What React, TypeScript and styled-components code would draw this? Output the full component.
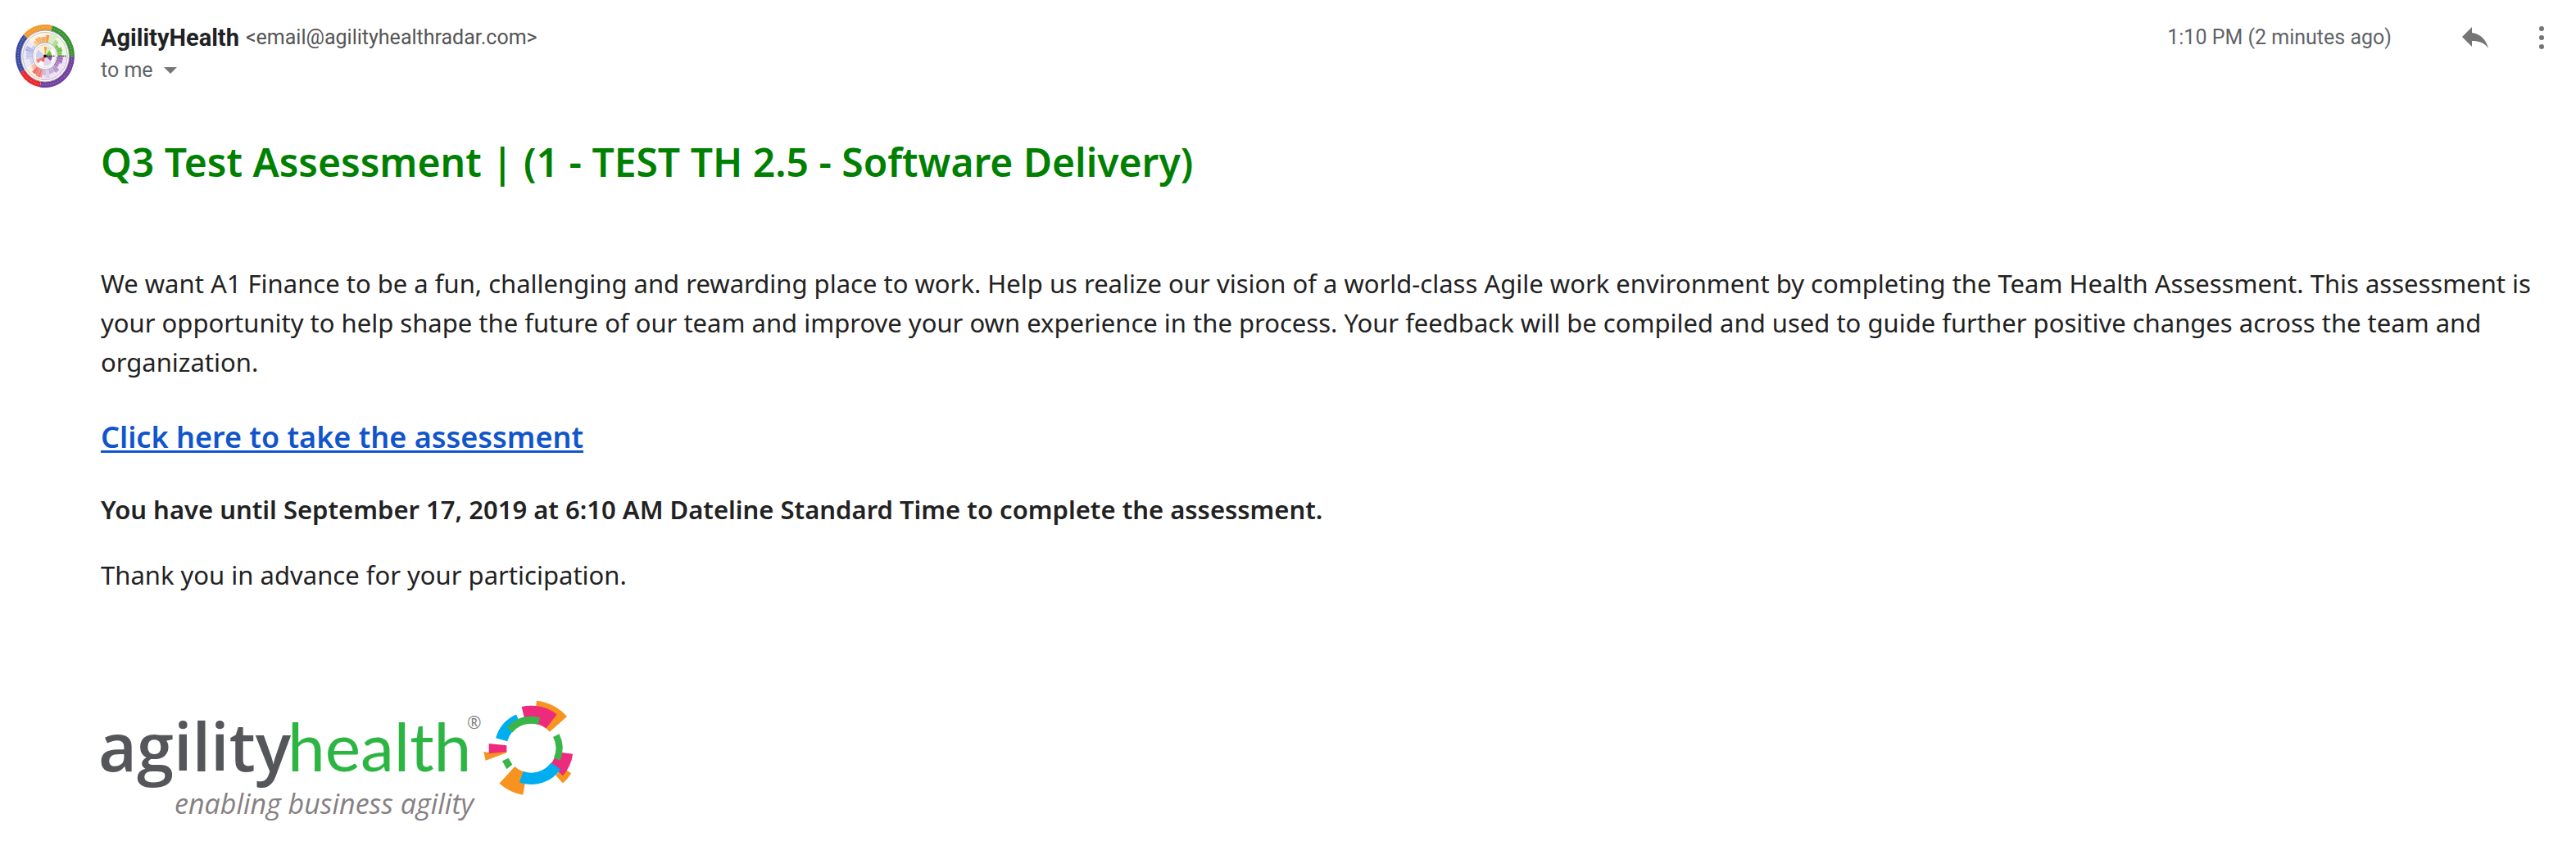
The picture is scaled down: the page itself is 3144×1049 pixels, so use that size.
import React from "react";
import styled, { createGlobalStyle } from "styled-components";

const GlobalStyle = createGlobalStyle`
  body {
    margin: 0;
    background: #fff;
    color: #222;
    font-family: "Noto Sans", "Open Sans", sans-serif;
  }
`;

const Message = styled.article`
  display: grid;
  grid-template-columns: 72px minmax(0, 1fr);
  column-gap: 32px;
  padding: 26px 18px 44px 19px;
`;

const AvatarCell = styled.div`
  padding-top: 4px;
  svg {
    display: block;
  }
`;

const Header = styled.header`
  display: flex;
  align-items: flex-start;
  justify-content: space-between;
  font-family: Roboto, "Noto Sans", sans-serif;
`;

const Sender = styled.div`
  display: flex;
  flex-direction: column;
  align-items: flex-start;
  gap: 4px;
`;

const Row = styled.div`
  display: flex;
  align-items: center;
  height: 40px;
`;

const SenderRow = styled(Row)`
  gap: 8px;
`;

const Name = styled.span`
  font-size: 29px;
  line-height: 40px;
  font-weight: 700;
  color: #202124;
`;

const Meta = styled.span<{ $tone?: string }>`
  font-size: 25px;
  line-height: 32px;
  white-space: nowrap;
  color: ${(p) => p.$tone ?? "#5f6368"};
`;

const Recipient = styled.button`
  display: flex;
  align-items: center;
  gap: 13px;
  padding: 0;
  border: 0;
  background: none;
  font-family: inherit;
  cursor: pointer;
`;

const Time = styled(Meta)`
  margin-right: 78px;
`;

const Actions = styled.div`
  display: flex;
  gap: 33px;
`;

const IconButton = styled.button`
  display: grid;
  place-items: center;
  width: 48px;
  height: 40px;
  padding: 0;
  border: 0;
  background: none;
  color: #757575;
  cursor: pointer;
`;

const Body = styled.div`
  font-size: 31px;
  line-height: 48px;
`;

const Title = styled.h1`
  margin: 64px 0 92px;
  font-size: 48px;
  line-height: 64px;
  font-weight: 600;
  color: #008000;
`;

const Paragraph = styled.p<{ $strong?: boolean }>`
  margin: 0 0 32px;
  font-weight: ${(p) => (p.$strong ? 650 : 400)};
`;

const CallToAction = styled.p`
  margin: 40px 0 36px;
  font-size: 36px;
  line-height: 56px;
  font-weight: 650;
`;

const Link = styled.a`
  color: #1155cc;
  text-decoration-thickness: 3px;
  text-underline-offset: 3px;
  text-decoration-skip-ink: none;
`;

const Signature = styled.footer`
  margin-top: 124px;
  svg {
    display: block;
    overflow: visible;
  }
`;

const point = (cx: number, cy: number, r: number, deg: number) => {
  const a = (deg * Math.PI) / 180;
  return `${(cx + r * Math.sin(a)).toFixed(2)} ${(cy - r * Math.cos(a)).toFixed(2)}`;
};

// Ring slice; angles run clockwise from twelve o'clock.
const slice = (cx: number, cy: number, inner: number, outer: number, from: number, to: number) =>
  `M${point(cx, cy, outer, from)}A${outer} ${outer} 0 0 1 ${point(cx, cy, outer, to)}` +
  `L${point(cx, cy, inner, to)}A${inner} ${inner} 0 0 0 ${point(cx, cy, inner, from)}Z`;

type Slice = [number, number, number, number, string];

const ringSlices: Slice[] = [
  [90, 175, 6.5, 48.5, "#f7931e"],
  [91, 156, -13, 37, "#ed2a7b"],
  [91, 135, -74, -24, "#00aeef"],
  [90, 117, -50, 16, "#39b54a"],
  [134, 173, 122, 138, "#f7931e"],
  [92, 154, 98, 131, "#ed2a7b"],
  [90, 115, 63, 113, "#39b54a"],
  [90, 174, 190, 222, "#f7931e"],
  [90, 133, 126, 199, "#00aeef"],
];

const avatarRim: Slice[] = [
  [92, 115, -47, 14, "#f39a2d"],
  [92, 115, 14, 91, "#3a9132"],
  [92, 115, 91, 190, "#7040a0"],
  [92, 115, 190, 238, "#e8262b"],
  [92, 115, 238, 313, "#3b4ba4"],
];

const avatarWedges: Slice[] = [
  [48, 88, -47, 14, "#fdf3e3"],
  [48, 88, 14, 91, "#eef7e4"],
  [48, 88, 91, 190, "#eee0f2"],
  [48, 88, 190, 238, "#fdeede"],
  [48, 88, 238, 313, "#e9e7f7"],
  [50, 68, -44, -32, "#f8c48d"],
  [50, 73, -32, -14, "#f5ae66"],
  [50, 70, -14, 2, "#f4a55a"],
  [50, 78, 2, 14, "#f09a48"],
  [50, 84, 16, 34, "#d3ecc0"],
  [50, 72, 34, 48, "#a9d98a"],
  [50, 62, 48, 62, "#74c044"],
  [50, 70, 62, 76, "#68bb38"],
  [50, 66, 76, 90, "#79c34c"],
  [46, 70, 92, 114, "#9a6fb8"],
  [46, 62, 114, 132, "#a57fc0"],
  [50, 74, 132, 146, "#b192cb"],
  [50, 68, 146, 166, "#c3a8d6"],
  [50, 80, 166, 178, "#dcc8e6"],
  [50, 70, 178, 190, "#c9afd9"],
  [50, 80, 190, 206, "#f07a70"],
  [50, 76, 206, 222, "#ef6a63"],
  [50, 66, 222, 236, "#f6b7a4"],
  [50, 62, 240, 262, "#d5d3f0"],
  [50, 74, 262, 284, "#c5c5ec"],
  [50, 80, 284, 298, "#aeb3e4"],
  [50, 60, 298, 312, "#c6c8ee"],
  [0, 42, -47, 14, "#fbf0da"],
  [0, 34, -6, 14, "#efa43e"],
  [0, 38, 14, 46, "#d5efbf"],
  [0, 26, 40, 91, "#72bd40"],
  [0, 28, 91, 130, "#8c55ae"],
  [0, 36, 130, 190, "#e2d2ec"],
  [0, 22, 190, 238, "#ec5f62"],
  [0, 38, 225, 250, "#f0837c"],
  [0, 36, 250, 313, "#cfcff0"],
];

const spokes = Array.from({ length: 40 }, (_, i) => i * 9 + 4);

const Avatar = () => (
  <svg width="72" height="77" viewBox="-115 -115 230 230" preserveAspectRatio="none" role="img" aria-label="AgilityHealth">
    {avatarRim.map(([a, b, c, d, fill]) => (
      <path key={c} d={slice(0, 0, a, b, c, d)} fill={fill} />
    ))}
    <circle r="105" fill="none" stroke="#fff" strokeOpacity="0.35" strokeWidth="4" strokeDasharray="4 6" />
    <circle r="95" fill="#fff" />
    {avatarWedges.map(([a, b, c, d, fill], i) => (
      <path key={i} d={slice(0, 0, a, b, c, d)} fill={fill} />
    ))}
    {spokes.map((deg) => (
      <path key={deg} d={`M${point(0, 0, 48, deg)}L${point(0, 0, 88, deg)}`} stroke="#fff" strokeOpacity="0.5" strokeWidth="2" />
    ))}
    <g fill="none" stroke="#77737c" strokeWidth="2">
      <circle r="94" />
      <circle r="87" strokeOpacity="0.6" />
      <circle r="49" strokeOpacity="0.8" />
      <circle r="42" strokeOpacity="0.4" />
    </g>
    <path d="M0 0H38M52 0H82" stroke="#2c2c2c" strokeWidth="4" strokeDasharray="5 3" />
    <circle r="6" fill="#161616" />
  </svg>
);

const Logo = () => (
  <svg width="577" height="152" viewBox="0 0 577 152" role="img" aria-label="agilityhealth, enabling business agility">
    <g fontFamily='"Open Sans", sans-serif'>
      <text x="-3" y="92" fontSize="81" fontWeight="600" fill="#54565a">agility</text>
      <text x="228" y="92" fontSize="82" fontFamily="Lato, sans-serif" fill="#2db544">health</text>
      <text x="90" y="144" fontSize="34" fontStyle="italic" fill="#868082">enabling business agility</text>
      <text x="447" y="40" fontSize="21" fill="#808080">®</text>
    </g>
    <g transform="translate(447 -10) scale(0.333333)">
      {ringSlices.map(([a, b, c, d, fill]) => (
        <path key={c} d={slice(235, 221, a, b, c, d)} fill={fill} />
      ))}
      <path d="M61 234L80 237L145 230V238L68 266Z" fill="#f7931e" />
      <path d="M80 204L145 211V234L80 241Z" fill="#ed2a7b" />
      <path d="M129 268L152 257L166 281L145 298Z" fill="#39b54a" />
    </g>
  </svg>
);

export default function App() {
  return (
    <>
      <GlobalStyle />
      <Message>
        <AvatarCell>
          <Avatar />
        </AvatarCell>
        <div>
          <Header>
            <Sender>
              <SenderRow>
                <Name>AgilityHealth</Name>
                <Meta $tone="#555">&lt;email@agilityhealthradar.com&gt;</Meta>
              </SenderRow>
              <Recipient type="button">
                <Meta>to me</Meta>
                <svg width="16" height="8" viewBox="0 0 16 8" fill="#757575" aria-hidden="true">
                  <path d="M0 0H16L8 8Z" />
                </svg>
              </Recipient>
            </Sender>
            <Row>
              <Time as="time">1:10 PM (2 minutes ago)</Time>
              <Actions>
                <IconButton type="button" aria-label="Reply">
                  <svg width="32" height="26" viewBox="0 0 32 26" fill="currentColor" aria-hidden="true">
                    <path d="M12 0V7C23 8.500 29.500 16 32 26C27.500 19.500 21 17 12 17V24L0 12Z" />
                  </svg>
                </IconButton>
                <IconButton type="button" aria-label="More">
                  <svg width="8" height="28" viewBox="0 0 8 28" fill="currentColor" aria-hidden="true">
                    <circle cx="4" cy="3" r="3" />
                    <circle cx="4" cy="14" r="3" />
                    <circle cx="4" cy="25" r="3" />
                  </svg>
                </IconButton>
              </Actions>
            </Row>
          </Header>
          <Body>
            <Title>Q3 Test Assessment | (1 - TEST TH 2.5 - Software Delivery)</Title>
            <Paragraph>
              We want A1 Finance to be a fun, challenging and rewarding place to work. Help us realize our vision of a
              world-class Agile work environment by completing the Team Health Assessment. This assessment is your
              opportunity to help shape the future of our team and improve your own experience in the process. Your
              feedback will be compiled and used to guide further positive changes across the team and organization.
            </Paragraph>
            <CallToAction>
              <Link href="#assessment">Click here to take the assessment</Link>
            </CallToAction>
            <Paragraph $strong>
              You have until September 17, 2019 at 6:10 AM Dateline Standard Time to complete the assessment.
            </Paragraph>
            <Paragraph>Thank you in advance for your participation.</Paragraph>
          </Body>
          <Signature>
            <Logo />
          </Signature>
        </div>
      </Message>
    </>
  );
}
